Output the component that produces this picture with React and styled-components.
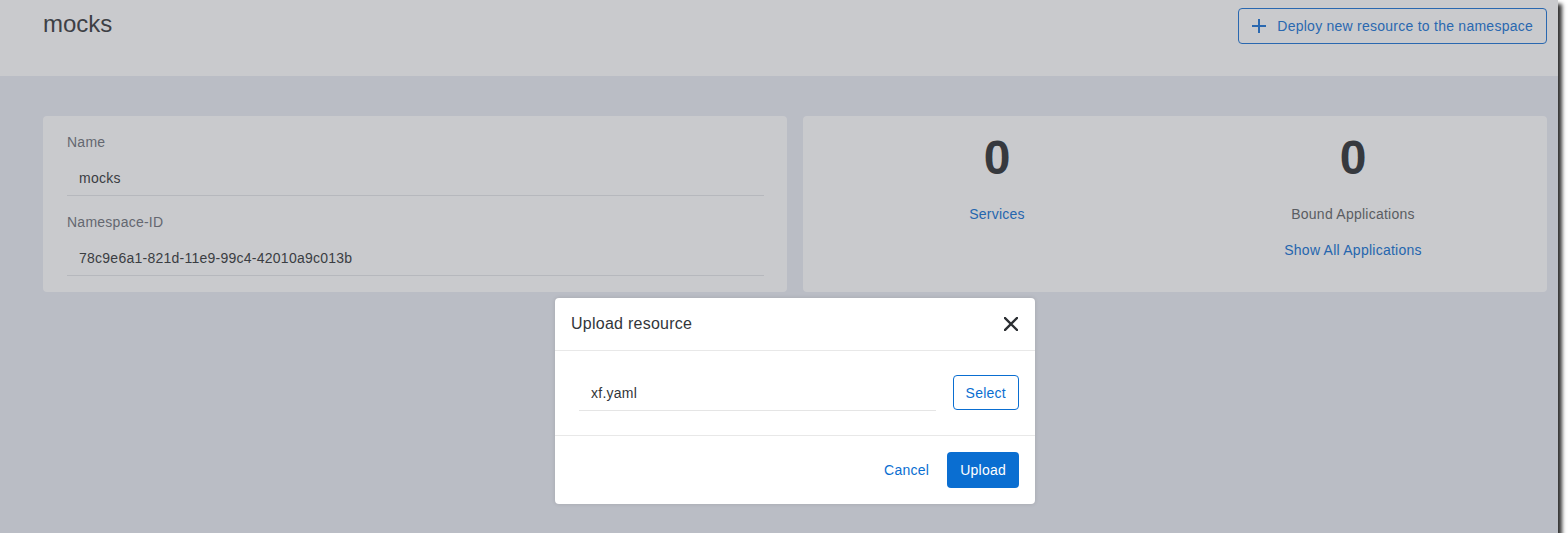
import React from "react";
import styled, { createGlobalStyle } from "styled-components";

const GlobalStyle = createGlobalStyle`
  html, body {
    margin: 0;
    padding: 0;
    background: #ffffff;
  }
  body {
    font-family: "Liberation Sans", Arial, sans-serif;
    letter-spacing: 0.25px;
    -webkit-font-smoothing: antialiased;
  }
  * {
    box-sizing: border-box;
  }
`;

const Window = styled.div`
  position: relative;
  width: 1558px;
  height: 533px;
  background: #babdc5;
  box-shadow: 4px 4px 4px rgba(0, 0, 0, 0.8);
  overflow: hidden;
`;

const Header = styled.header`
  display: flex;
  justify-content: space-between;
  align-items: flex-start;
  height: 76px;
  padding: 0 11px 0 43px;
  background: #c9cacd;
`;

const Title = styled.h1`
  margin: 10px 0 0;
  font-size: 24px;
  font-weight: 400;
  letter-spacing: 0;
  color: #3d4045;
`;

const OutlineButton = styled.button`
  display: flex;
  align-items: center;
  gap: 11px;
  height: ${(p) => p.height || 36}px;
  padding: 0 ${(p) => p.pad || 13}px;
  margin-top: ${(p) => p.top || 0}px;
  background: ${(p) => (p.light ? "#ffffff" : "transparent")};
  border: 1px solid ${(p) => (p.light ? "#0a6ed1" : "#2a68b0")};
  border-radius: 4px;
  color: ${(p) => (p.light ? "#0a6ed1" : "#2a68b0")};
  font-family: inherit;
  font-size: 14px;
  letter-spacing: inherit;
  cursor: pointer;
`;

const Main = styled.main`
  display: grid;
  grid-template-columns: 1fr 1fr;
  gap: 16px;
  padding: 40px 11px 0 43px;
`;

const Card = styled.section`
  background: #c9cacd;
  border-radius: 4px;
  height: 176px;
`;

const InfoCard = styled(Card)`
  padding: 18px 23px 16px 24px;
`;

const Field = styled.div`
  & + & {
    margin-top: 18px;
  }
`;

const Label = styled.div`
  font-size: 14px;
  line-height: 16px;
  color: #646770;
  margin-bottom: 10px;
`;

const Value = styled.div`
  display: flex;
  align-items: center;
  height: 36px;
  padding-left: 12px;
  border-bottom: 1px solid #b6b8bd;
  font-size: 14px;
  color: #3a3d42;
`;

const StatsCard = styled(Card)`
  display: grid;
  grid-template-columns: 1fr 1fr;
  padding: 18px 16px 0 16px;
`;

const Stat = styled.div`
  display: flex;
  flex-direction: column;
  align-items: center;
`;

const Count = styled.div`
  font-size: 48px;
  line-height: 48px;
  font-weight: 700;
  letter-spacing: 0;
  color: #36393e;
  margin-bottom: 24px;
`;

const StatText = styled.div`
  font-size: 14px;
  line-height: 16px;
  color: ${(p) => (p.link ? "#2566ae" : "#5a5d62")};
  margin-bottom: 20px;
  cursor: ${(p) => (p.link ? "pointer" : "default")};
`;

const Dialog = styled.div`
  position: absolute;
  left: 555px;
  top: 298px;
  width: 480px;
  background: #ffffff;
  border-radius: 4px;
  box-shadow: 0 0 4px rgba(0, 0, 0, 0.12);
`;

const DialogHeader = styled.div`
  display: flex;
  align-items: center;
  justify-content: space-between;
  height: 53px;
  padding: 0 16px;
  border-bottom: 1px solid #e8e8e8;
`;

const DialogTitle = styled.h2`
  margin: 0;
  font-size: 16px;
  font-weight: 400;
  color: #32363a;
`;

const CloseButton = styled.button`
  display: flex;
  padding: 0;
  border: none;
  background: none;
  cursor: pointer;
  margin-right: 1px;
`;

const DialogBody = styled.div`
  display: flex;
  align-items: flex-start;
  gap: 17px;
  padding: 24px 16px 24px 24px;
  border-bottom: 1px solid #e8e8e8;
`;

const FileInput = styled.div`
  flex: 1;
  display: flex;
  align-items: center;
  height: 36px;
  padding-left: 12px;
  border-bottom: 1px solid #e5e5e5;
  font-size: 14px;
  color: #32363a;
`;

const DialogFooter = styled.div`
  display: flex;
  justify-content: flex-end;
  align-items: center;
  gap: 8px;
  padding: 16px;
`;

const TextButton = styled.button`
  height: 36px;
  padding: 0 10px;
  border: none;
  background: none;
  color: #0a6ed1;
  font-family: inherit;
  font-size: 14px;
  letter-spacing: inherit;
  cursor: pointer;
`;

const PrimaryButton = styled.button`
  height: 36px;
  padding: 0 13px;
  border: none;
  border-radius: 4px;
  background: #0a6ed1;
  color: #ffffff;
  font-family: inherit;
  font-size: 14px;
  letter-spacing: inherit;
  cursor: pointer;
`;

const PlusIcon = () => (
  <svg width="14" height="14" viewBox="0 0 14 14">
    <path d="M7 0v14M0 7h14" stroke="currentColor" strokeWidth="2" fill="none" />
  </svg>
);

const CloseIcon = () => (
  <svg width="14" height="14" viewBox="0 0 14 14">
    <path
      d="M1 1l12 12M13 1L1 13"
      stroke="#2b2e32"
      strokeWidth="2.4"
      strokeLinecap="square"
      fill="none"
    />
  </svg>
);

const fields = [
  { label: "Name", value: "mocks" },
  { label: "Namespace-ID", value: "78c9e6a1-821d-11e9-99c4-42010a9c013b" },
];

export default function App() {
  return (
    <>
      <GlobalStyle />
      <Window>
        <Header>
          <Title>mocks</Title>
          <OutlineButton top={8}>
            <PlusIcon />
            Deploy new resource to the namespace
          </OutlineButton>
        </Header>
        <Main>
          <InfoCard>
            {fields.map((f) => (
              <Field key={f.label}>
                <Label>{f.label}</Label>
                <Value>{f.value}</Value>
              </Field>
            ))}
          </InfoCard>
          <StatsCard>
            <Stat>
              <Count>0</Count>
              <StatText link>Services</StatText>
            </Stat>
            <Stat>
              <Count>0</Count>
              <StatText>Bound Applications</StatText>
              <StatText link>Show All Applications</StatText>
            </Stat>
          </StatsCard>
        </Main>
        <Dialog>
          <DialogHeader>
            <DialogTitle>Upload resource</DialogTitle>
            <CloseButton>
              <CloseIcon />
            </CloseButton>
          </DialogHeader>
          <DialogBody>
            <FileInput>xf.yaml</FileInput>
            <OutlineButton light pad={12} height={35}>
              Select
            </OutlineButton>
          </DialogBody>
          <DialogFooter>
            <TextButton>Cancel</TextButton>
            <PrimaryButton>Upload</PrimaryButton>
          </DialogFooter>
        </Dialog>
      </Window>
    </>
  );
}
